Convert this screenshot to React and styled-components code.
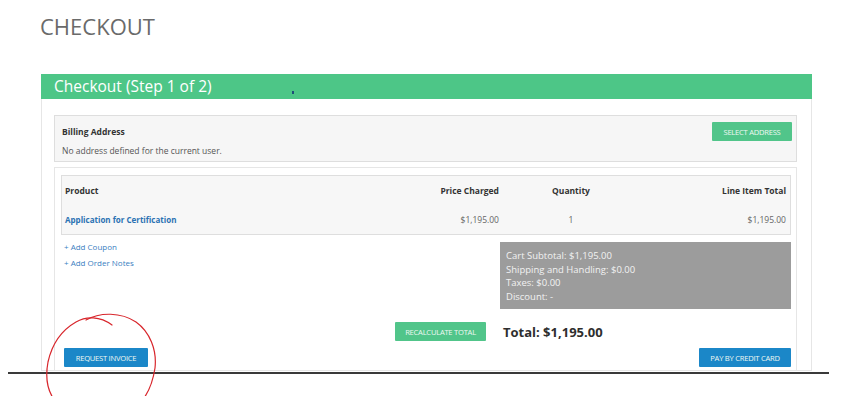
import React from 'react';
import styled, { createGlobalStyle } from 'styled-components';

const GlobalStyle = createGlobalStyle`
  * { box-sizing: border-box; }
  html, body {
    margin: 0;
    background: #fff;
    font-family: "Open Sans", "Liberation Sans", sans-serif;
  }
`;

const Page = styled.div`
  position: relative;
  width: 866px;
  height: 396px;
  overflow: hidden;
  padding: 9px 0 0 0;
`;

const Title = styled.h1`
  margin: 0 0 0 40px;
  font-size: 22px;
  line-height: 34px;
  font-weight: 400;
  color: #6a6a6a;
`;

const Panel = styled.div`
  margin: 31px 0 0 41px;
  width: 771px;
`;

const PanelHeading = styled.div`
  position: relative;
  height: 25px;
  background: #4dc687;
  color: #fff;
  font-size: 15.5px;
  line-height: 25px;
  padding-left: 13px;
`;

const CursorMark = styled.span`
  position: absolute;
  left: 251px;
  top: 17px;
  width: 2px;
  height: 3px;
  background: #1d4f7a;
`;

const PanelBody = styled.div`
  height: 272px;
  overflow: hidden;
  border: 1px solid #e6e6e6;
  border-top: none;
  padding: 16px 14px 0 12px;
`;

const Well = styled.div`
  background: #f6f6f6;
  border: 1px solid #dedede;
  padding: 6px 4px 2px 7px;
  font-size: 8.5px;
  color: #555;
`;

const WellHead = styled.div`
  display: flex;
  justify-content: space-between;
  align-items: center;
`;

const Label = styled.div`
  font-weight: 700;
  color: #333;
`;

const Note = styled.div`
  line-height: 16px;
  margin-top: 2px;
`;

const Button = styled.button`
  width: ${p => p.$w}px;
  height: 19px;
  padding: 0;
  border: none;
  border-radius: 1px;
  background: ${p => (p.$blue ? '#1b87c8' : '#51c58a')};
  color: #eef8f2;
  font-family: "Open Sans", "Liberation Sans", sans-serif;
  font-size: 7.6px;
  letter-spacing: -0.25px;
  text-transform: uppercase;
  text-align: center;
`;

const CartBox = styled.div`
  margin-top: 5px;
  border: 1px solid #e6e6e6;
  border-bottom: none;
  height: 220px;
  padding: 7px 5px 0 6px;
`;

const Table = styled.div`
  background: #f7f7f7;
  border: 1px solid #dedede;
  padding: 0 4px 0 3px;
`;

const Row = styled.div`
  display: grid;
  grid-template-columns: 344px 90px 144px 1fr;
  height: ${p => p.$h}px;
  align-items: center;
  font-size: 8.5px;
  color: ${p => (p.$head ? '#333' : '#666')};
  font-weight: ${p => (p.$head ? 700 : 400)};
`;

const Cell = styled.div`
  text-align: ${p => p.$align || 'left'};
`;

const ProductLink = styled.a`
  color: #2b72b3;
  font-weight: 700;
  font-size: 8px;
  text-decoration: none;
`;

const Summary = styled.div`
  display: grid;
  grid-template-columns: 1fr 291px;
  margin-top: 7px;
`;

const Links = styled.div`
  display: flex;
  flex-direction: column;
  padding: 0 0 0 3px;
  font-size: 8px;
  line-height: 16px;
  margin-top: -3px;
`;

const SmallLink = styled.a`
  color: #3a80c1;
  text-decoration: none;
`;

const Totals = styled.div`
  height: 67px;
  background: #9c9c9c;
  color: #f2f2f2;
  font-size: 9.5px;
  line-height: 13.5px;
  padding: 7px 6px;
`;

const RecalcRow = styled.div`
  display: grid;
  grid-template-columns: 1fr 291px;
  align-items: center;
  margin-top: 13px;
`;

const RecalcCell = styled.div`
  display: flex;
  justify-content: flex-end;
  padding-right: 14px;
`;

const Total = styled.div`
  padding-left: 3px;
  font-size: 13px;
  font-weight: 700;
  color: #2e2e2e;
`;

const Actions = styled.div`
  display: flex;
  justify-content: space-between;
  margin-top: 7px;
  padding-left: 3px;
`;

const Rule = styled.div`
  margin: 1px 0 0 8px;
  width: 821px;
  height: 1.5px;
  background: #3a3a3a;
`;

const Scribble = styled.svg`
  position: absolute;
  left: 0;
  top: 0;
  pointer-events: none;
`;

export default function App() {
  return (
    <>
      <GlobalStyle />
      <Page>
        <Title>CHECKOUT</Title>
        <Panel>
          <PanelHeading>
            Checkout (Step 1 of 2)
            <CursorMark />
          </PanelHeading>
          <PanelBody>
            <Well>
              <WellHead>
                <Label>Billing Address</Label>
                <Button $w={80}>Select Address</Button>
              </WellHead>
              <Note>No address defined for the current user.</Note>
            </Well>
            <CartBox>
              <Table>
                <Row $head $h={29}>
                  <Cell>Product</Cell>
                  <Cell $align="right">Price Charged</Cell>
                  <Cell $align="center">Quantity</Cell>
                  <Cell $align="right">Line Item Total</Cell>
                </Row>
                <Row $h={29}>
                  <Cell><ProductLink href="#">Application for Certification</ProductLink></Cell>
                  <Cell $align="right">$1,195.00</Cell>
                  <Cell $align="center">1</Cell>
                  <Cell $align="right">$1,195.00</Cell>
                </Row>
              </Table>
              <Summary>
                <Links>
                  <SmallLink href="#">+ Add Coupon</SmallLink>
                  <SmallLink href="#">+ Add Order Notes</SmallLink>
                </Links>
                <Totals>
                  <div>Cart Subtotal: $1,195.00</div>
                  <div>Shipping and Handling: $0.00</div>
                  <div>Taxes: $0.00</div>
                  <div>Discount: -</div>
                </Totals>
              </Summary>
              <RecalcRow>
                <RecalcCell>
                  <Button $w={91}>Recalculate Total</Button>
                </RecalcCell>
                <Total>Total: $1,195.00</Total>
              </RecalcRow>
              <Actions>
                <Button $blue $w={84}>Request Invoice</Button>
                <Button $blue $w={92}>Pay by Credit Card</Button>
              </Actions>
            </CartBox>
          </PanelBody>
        </Panel>
        <Rule />
        <Scribble width="866" height="396" viewBox="0 0 866 396">
          <path
            d="M112 325 C100 316 86 316 76 322 C62 330 52 344 48 362 C45 378 48 390 53 398"
            fill="none" stroke="#d8262c" strokeWidth="1.2" strokeLinecap="round"
          />
          <path
            d="M86 320 C100 312 121 312 136 322 C150 332 157 350 155 368 C153 381 149 391 144 398"
            fill="none" stroke="#d8262c" strokeWidth="1.2" strokeLinecap="round"
          />
        </Scribble>
      </Page>
    </>
  );
}
